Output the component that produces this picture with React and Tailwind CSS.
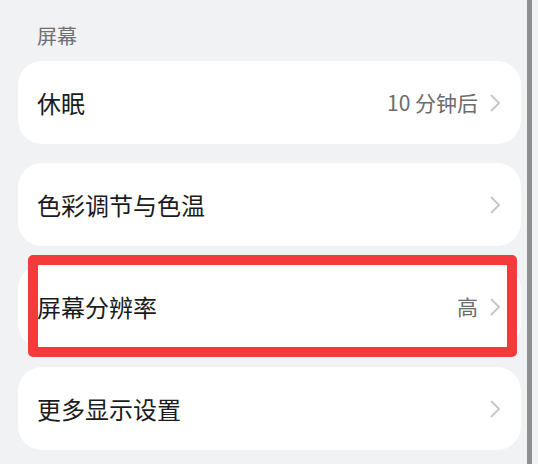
const font = { fontFamily: '"Noto Sans CJK SC", "Noto Sans", sans-serif' };

function Chevron() {
  return (
    <svg width="11" height="18" viewBox="0 0 11 18" fill="none" className="shrink-0">
      <path d="M1.5 1.5 L9 9 L1.5 16.5" stroke="#c6c6c6" strokeWidth="1.8" strokeLinecap="round" strokeLinejoin="round" />
    </svg>
  );
}

function Row({ label, value }) {
  return (
    <div className="h-[83px] bg-white rounded-[24px] flex items-center pl-[19px] pr-[20px]">
      <span className="text-[24px] leading-none text-[#1b1b1b] flex-1">{label}</span>
      {value && <span className="text-[21px] leading-none text-[#6c6c6c] mr-[12px]">{value}</span>}
      <Chevron />
    </div>
  );
}

export default function App() {
  return (
    <div className="relative h-[464px] w-[538px] overflow-hidden bg-[#f1f2f4]" style={font}>
      <div className="pl-[18px] pr-[17px]">
        <div className="h-[61px] pl-[19px] pt-[24px] text-[20px] leading-[24px] text-[#707070]">屏幕</div>
        <div className="flex flex-col gap-[19px]">
          <Row label="休眠" value="10 分钟后" />
          <Row label="色彩调节与色温" />
          <Row label="屏幕分辨率" value="高" />
          <Row label="更多显示设置" />
        </div>
      </div>

      {/* highlight box */}
      <div className="absolute left-[28px] top-[255px] w-[489px] h-[102px] border-[10px] border-[#f43a3a] rounded-[5px]" />

      {/* scrollbar */}
      <div className="absolute right-[6px] top-0 w-[5px] h-full bg-[#8f8f8f]" />
    </div>
  );
}
